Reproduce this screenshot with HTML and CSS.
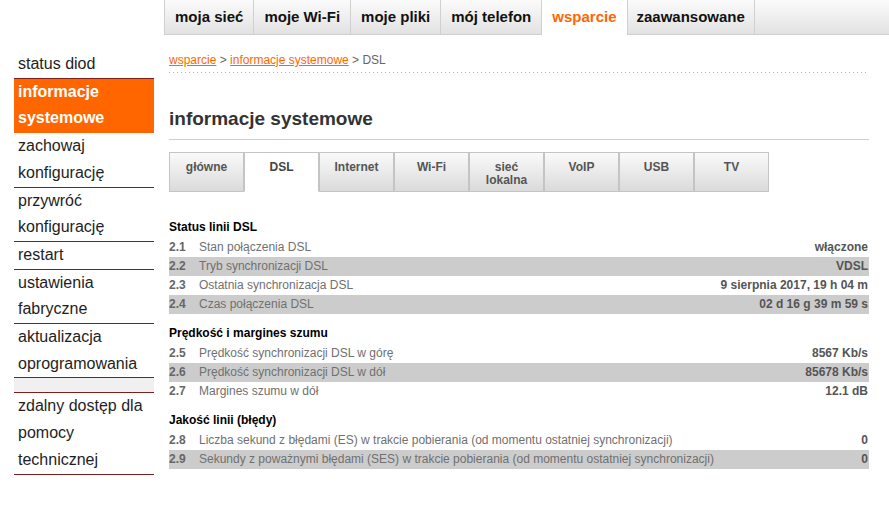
FILE: index.html
```html
<!DOCTYPE html>
<html lang="pl">
<head>
<meta charset="utf-8">
<title>informacje systemowe</title>
<link rel="stylesheet" href="styles.css">
</head>
<body>
<nav class="topnav">
  <a class="navtab">moja sieć</a>
  <a class="navtab">moje Wi-Fi</a>
  <a class="navtab">moje pliki</a>
  <a class="navtab">mój telefon</a>
  <a class="navtab active">wsparcie</a>
  <a class="navtab">zaawansowane</a>
</nav>
<div class="layout">
  <aside class="sidebar">
    <a class="side-item">status diod</a>
    <a class="side-item active">informacje<br>systemowe</a>
    <a class="side-item">zachowaj<br>konfigurację</a>
    <a class="side-item">przywróć<br>konfigurację</a>
    <a class="side-item">restart</a>
    <a class="side-item">ustawienia<br>fabryczne</a>
    <a class="side-item">aktualizacja<br>oprogramowania</a>
    <div class="side-spacer"></div>
    <a class="side-item">zdalny dostęp dla<br>pomocy<br>technicznej</a>
  </aside>
  <main class="main">
    <div class="breadcrumb"><a class="crumb">wsparcie</a> &gt; <a class="crumb">informacje systemowe</a> &gt; DSL</div>
    <h1 class="title">informacje systemowe</h1>
    <div class="tabs">
      <div class="tab">główne</div>
      <div class="tab active">DSL</div>
      <div class="tab">Internet</div>
      <div class="tab">Wi-Fi</div>
      <div class="tab">sieć<br>lokalna</div>
      <div class="tab">VoIP</div>
      <div class="tab">USB</div>
      <div class="tab">TV</div>
    </div>

    <section class="section first">
      <h2 class="sec-title">Status linii DSL</h2>
      <div class="row"><span class="num">2.1</span><span class="label">Stan połączenia DSL</span><span class="value">włączone</span></div>
      <div class="row alt"><span class="num">2.2</span><span class="label">Tryb synchronizacji DSL</span><span class="value">VDSL</span></div>
      <div class="row"><span class="num">2.3</span><span class="label">Ostatnia synchronizacja DSL</span><span class="value">9 sierpnia 2017, 19 h 04 m</span></div>
      <div class="row alt"><span class="num">2.4</span><span class="label">Czas połączenia DSL</span><span class="value">02 d 16 g 39 m 59 s</span></div>
    </section>

    <section class="section">
      <h2 class="sec-title">Prędkość i margines szumu</h2>
      <div class="row"><span class="num">2.5</span><span class="label">Prędkość synchronizacji DSL w górę</span><span class="value">8567 Kb/s</span></div>
      <div class="row alt"><span class="num">2.6</span><span class="label">Prędkość synchronizacji DSL w dół</span><span class="value">85678 Kb/s</span></div>
      <div class="row"><span class="num">2.7</span><span class="label">Margines szumu w dół</span><span class="value">12.1 dB</span></div>
    </section>

    <section class="section">
      <h2 class="sec-title">Jakość linii (błędy)</h2>
      <div class="row"><span class="num">2.8</span><span class="label">Liczba sekund z błędami (ES) w trakcie pobierania (od momentu ostatniej synchronizacji)</span><span class="value">0</span></div>
      <div class="row alt"><span class="num">2.9</span><span class="label">Sekundy z poważnymi błędami (SES) w trakcie pobierania (od momentu ostatniej synchronizacji)</span><span class="value">0</span></div>
    </section>
  </main>
</div>
</body>
</html>
```
FILE: styles.css
```css
* { box-sizing: border-box; }
body {
  margin: 0;
  background: #fff;
  font-family: Arial, "Liberation Sans", sans-serif;
  color: #222;
}
a { cursor: pointer; }

.topnav {
  display: flex;
  margin-left: 164px;
  height: 35px;
  background: linear-gradient(#fbfbfb, #e2e2e2);
  border-bottom: 1px solid #cfcfcf;
}
.navtab {
  display: block;
  padding: 0 10px;
  line-height: 34px;
  font-size: 15px;
  font-weight: bold;
  color: #111;
  border-left: 1px solid #d0d0d0;
  text-decoration: none;
  white-space: nowrap;
}
.navtab:last-child { border-right: 1px solid #d0d0d0; padding: 0 9px; }
.navtab.active {
  background: #fff;
  color: #ff6600;
  height: 35px;
  margin-bottom: -1px;
}

.layout {
  display: flex;
  align-items: flex-start;
  padding-top: 16px;
}
.sidebar {
  width: 140px;
  margin-left: 14px;
  display: flex;
  flex-direction: column;
}
.side-item {
  display: block;
  padding-left: 4px;
  font-size: 16px;
  line-height: 26.7px;
  color: #1e1e1e;
  border-bottom: 1px solid #7a1e1e;
  text-decoration: none;
}
.side-item.active {
  background: #ff6600;
  color: #fff;
  font-weight: bold;
  border-bottom-color: #ff6600;
}
.side-spacer {
  height: 15px;
  background: #f0f0f0;
  border-bottom: 1px solid #7a1e1e;
}

.main {
  width: 700px;
  margin-left: 15px;
}
.breadcrumb {
  font-size: 12px;
  line-height: 18px;
  padding-bottom: 3px;
  color: #666;
  background: repeating-linear-gradient(to right, #f3a070 0 1px, transparent 1px 4px) left bottom / 100% 1px no-repeat;
  padding-bottom: 4px;
}
.crumb {
  color: #ff6600;
  text-decoration: underline;
}
.title {
  margin: 34px 0 0;
  font-size: 19px;
  line-height: 24px;
  font-weight: bold;
  color: #333;
  padding-bottom: 8px;
  border-bottom: 1px solid #cfcfcf;
}

.tabs {
  display: flex;
  margin-top: 12px;
}
.tab {
  width: 75px;
  height: 40px;
  padding-top: 8px;
  text-align: center;
  font-size: 12px;
  line-height: 13px;
  font-weight: bold;
  color: #555;
  background: linear-gradient(#fafafa, #dadada);
  border: 1px solid #c4c4c4;
}
.tab.active {
  background: #fff;
  border-bottom-color: #fff;
  color: #444;
}

.section { margin-top: 9px; }
.section.first { margin-top: 25px; }
.sec-title {
  margin: 0;
  font-size: 12px;
  line-height: 21px;
  font-weight: bold;
  color: #000;
}
.row {
  display: grid;
  grid-template-columns: 30px 1fr auto;
  height: 19px;
  align-items: center;
  font-size: 12px;
  line-height: 19px;
}
.row.alt { background: #cccccc; }
.num {
  font-weight: bold;
  color: #666;
}
.label { color: #707070; }
.value {
  font-weight: bold;
  color: #555;
  padding-right: 1px;
  text-align: right;
}
```
